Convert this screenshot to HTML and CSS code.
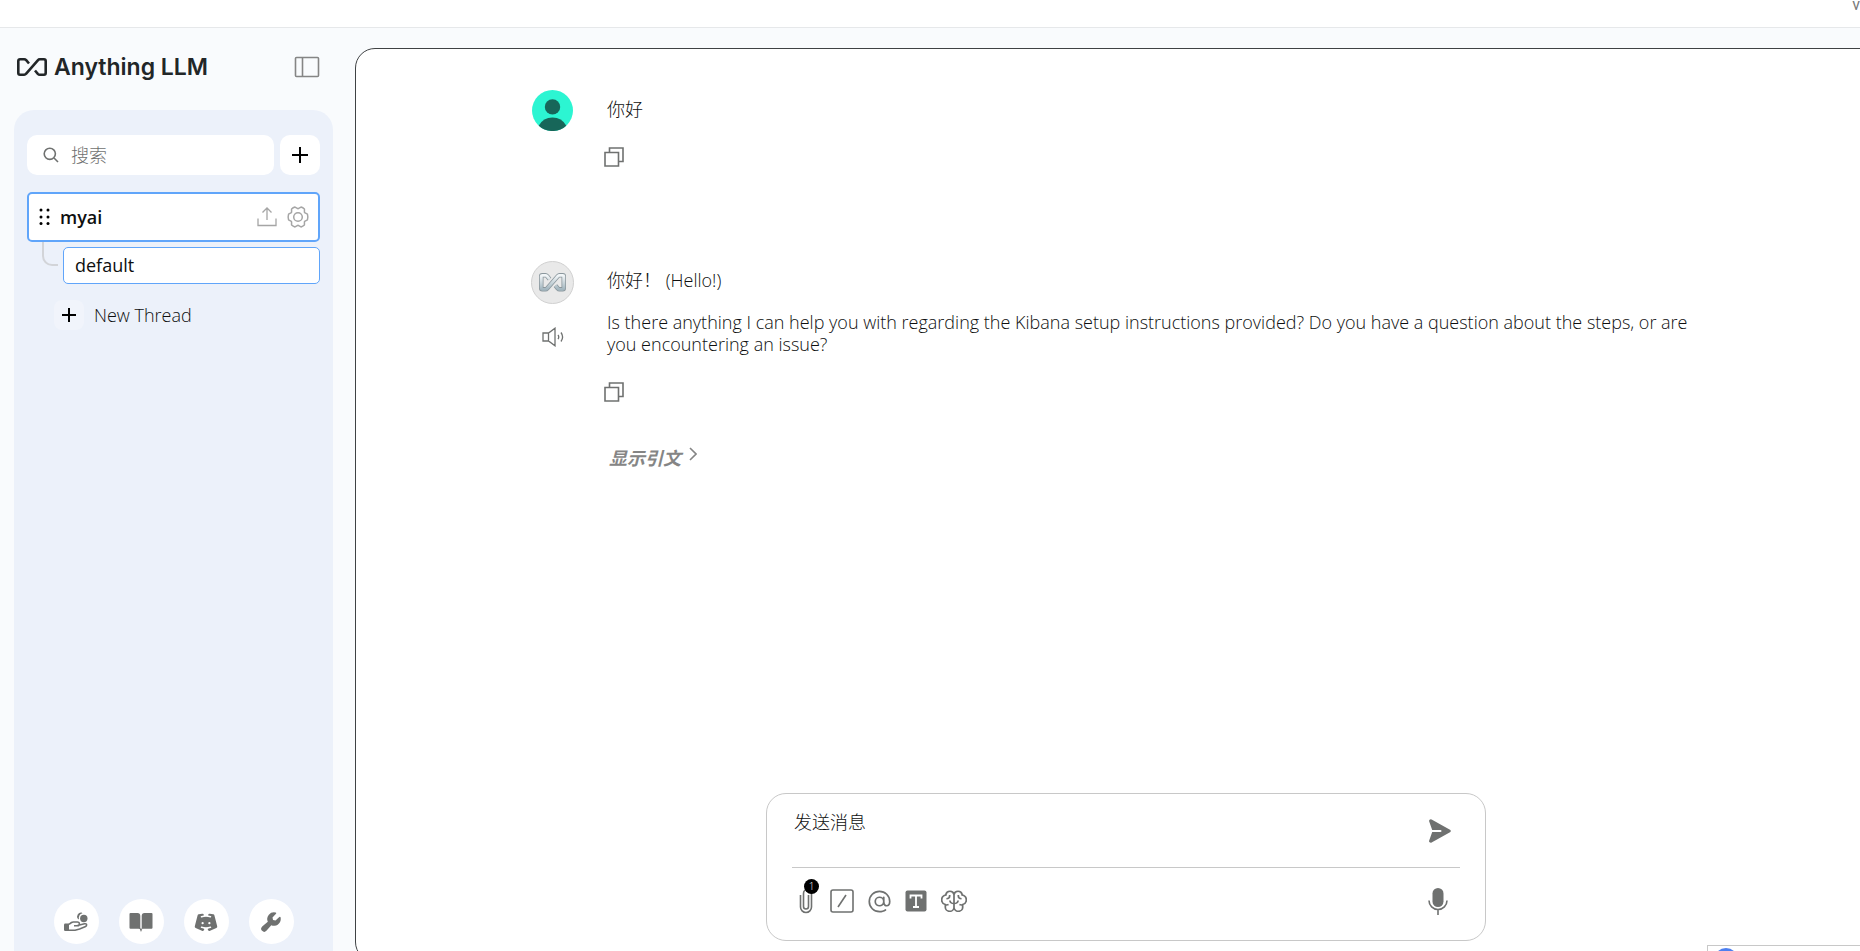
FILE: index.html
```html
<!DOCTYPE html>
<html lang="zh">
  <head>
    <meta charset="UTF-8" />
    <meta name="viewport" content="width=device-width, initial-scale=1.0" />
    <title>Anything LLM</title>

    <link rel="stylesheet" href="styles.css">
  </head>
  <body>
    <header class="topbar">v</header>

    <div class="app">
      <!-- ============== Sidebar ============== -->
      <aside class="sidebar">
        <div class="brand">
          <a class="brand-link" href="#">
            <svg class="brand-logo" viewBox="0 0 30 18" width="30" height="18">
              <path
                d="M12 5.5 9.2 2.2Q8.300 1.300 7.200 1.300H3Q1.300 1.300 1.300 3V15Q1.300 16.700 3 16.700H7.200Q8.300 16.700 9.200 15.700L20.800 2.300Q21.700 1.300 22.800 1.300H27Q28.700 1.300 28.700 3V15Q28.700 16.700 27 16.700H22.800Q21.700 16.700 20.800 15.800L18 12.500"
                fill="none" stroke="currentColor" stroke-width="2.6" />
            </svg>
            <span>Anything LLM</span>
          </a>
          <button class="icon-btn" aria-label="Toggle sidebar">
            <svg viewBox="0 0 26 22" width="26" height="22" class="line">
              <rect x="1.500" y="1.500" width="23" height="19" rx="1" />
              <path d="M8.500 1.500v19" />
            </svg>
          </button>
        </div>

        <div class="panel">
          <div class="search-row">
            <label class="search">
              <svg viewBox="0 0 16 16" width="16" height="16" class="line">
                <circle cx="6.800" cy="6.800" r="5.600" />
                <path d="M11 11l4 4" />
              </svg>
              <input type="text" placeholder="搜索" aria-label="搜索" />
            </label>
            <button class="add-btn" aria-label="New workspace">
              <svg viewBox="0 0 16 16" width="16" height="16" class="plus">
                <path d="M8 0v16M0 8h16" />
              </svg>
            </button>
          </div>

          <div class="workspace">
            <svg viewBox="0 0 12 18" width="12" height="18" class="grip">
              <circle cx="2" cy="2" r="1.500" /><circle cx="9" cy="2" r="1.500" />
              <circle cx="2" cy="9" r="1.500" /><circle cx="9" cy="9" r="1.500" />
              <circle cx="2" cy="15.500" r="1.500" /><circle cx="9" cy="15.500" r="1.500" />
            </svg>
            <a class="workspace-name" href="#">myai</a>
            <button class="icon-btn pale" aria-label="Upload">
              <svg viewBox="0 0 20 20" width="20" height="20" class="line thin">
                <path d="M1 11.500V18.500H19V11.500M10 13V1.500M5.500 5.500 10 1l4.500 4.500" />
              </svg>
            </button>
            <button class="icon-btn pale" aria-label="Settings">
              <svg viewBox="16 16 224 224" width="24" height="24" class="gear">
                <circle cx="128" cy="128" r="40" />
                <path d="M130 206h-4l-26 15a96 96 0 0 1-32-18l-.1-30-2-3.500-26-15a94 94 0 0 1 0-53l26-15 2-3.500.1-30a96 96 0 0 1 32-18l26 15h4l26-15a96 96 0 0 1 32 18l.1 30 2 3.500 26 15a94 94 0 0 1 0 53l-26 15-2 3.500-.1 30a96 96 0 0 1-32 18Z" />
              </svg>
            </button>
          </div>

          <div class="threads">
            <span class="branch"></span>
            <a class="thread" href="#">default</a>
          </div>

          <button class="new-thread">
            <span class="new-thread-icon">
              <svg viewBox="0 0 14 14" width="14" height="14" class="plus">
                <path d="M7 0v14M0 7h14" />
              </svg>
            </span>
            New Thread
          </button>

          <nav class="footer-links">
            <a href="#" aria-label="Support">
              <svg viewBox="0 0 24 20" width="24" height="20">
                <circle cx="19.800" cy="6.500" r="3.700" fill="currentColor" />
                <path d="M17.500 0.600A4 4 0 0 0 13.800 6.800L15 7.500a5 5 0 0 1 3.500-6.300z" fill="currentColor" />
                <path d="M0 12.800q0-1.200 1.200-1.200H5V19H1.200Q0 19 0 17.800z" fill="currentColor" />
                <path d="M5 12.300 7.500 10.500Q8.200 10 9.300 10H13.500a1.900 1.900 0 0 1 0 3.800H10M13.500 13.600l7-1.800q2-.3 2.100 1t-1 1.700l-6 2.600-4.500 1.200H5" fill="none" stroke="currentColor" stroke-width="1.600" />
              </svg>
            </a>
            <a href="#" aria-label="Docs">
              <svg viewBox="0 0 24 20" width="24" height="20" fill="currentColor">
                <path d="M1.500 1H8.500Q11.300 1 11.300 4V17.500Q11.300 16.800 9.500 16.800H1.500Q.5 16.800 .5 15.800V2Q.5 1 1.500 1ZM22.500 1H15.500Q12.700 1 12.700 4V17.500Q12.700 16.800 14.500 16.800H22.500Q23.500 16.800 23.500 15.800V2Q23.500 1 22.500 1ZM10.600 16.500H13.400L12 20Z" />
              </svg>
            </a>
            <a href="#" aria-label="Discord">
              <svg viewBox="0 0 256 256" width="24" height="24" fill="currentColor">
                <path d="M247.510,174.390,218,58a16.080,16.080,0,0,0-13-11.880l-36.060-5.920a16.220,16.220,0,0,0-18.260,11.880l-.21.85a4,4,0,0,0,3.270,4.930,155.620,155.620,0,0,1,24.410,5.620,8.200,8.200,0,0,1,5.620,9.700,8,8,0,0,1-10.190,5.640,155.400,155.400,0,0,0-90.800-.1,8.220,8.220,0,0,1-10.280-4.810,8,8,0,0,1,5.080-10.330,156.850,156.850,0,0,1,24.720-5.720,4,4,0,0,0,3.270-4.930l-.21-.85A16.210,16.210,0,0,0,87.080,40.210L51,46.130A16.080,16.080,0,0,0,38,58L8.490,174.390a15.940,15.940,0,0,0,9.060,18.510l67,29.710a16.170,16.170,0,0,0,21.710-9.100l3.490-9.450a4,4,0,0,0-3.270-5.350,158.130,158.130,0,0,1-28.630-6.200,8.200,8.200,0,0,1-5.610-9.670,8,8,0,0,1,10.200-5.660,155.590,155.590,0,0,0,91.120,0,8,8,0,0,1,10.190,5.650,8.190,8.190,0,0,1-5.610,9.680,157.840,157.840,0,0,1-28.620,6.200,4,4,0,0,0-3.270,5.350l3.490,9.450a16.180,16.180,0,0,0,21.710,9.100l67-29.710A15.940,15.940,0,0,0,247.510,174.390ZM92,152a12,12,0,1,1,12-12A12,12,0,0,1,92,152Zm72,0a12,12,0,1,1,12-12A12,12,0,0,1,164,152Z" />
              </svg>
            </a>
            <a href="#" aria-label="Settings">
              <svg viewBox="0 0 256 256" width="24" height="24" fill="currentColor">
                <path d="M232,96a72,72,0,0,1-100.940,66L79,222.220c-.12.14-.26.29-.39.42a32,32,0,0,1-45.260-45.260c.14-.13.28-.27.43-.39L94,124.940a72.070,72.070,0,0,1,83.540-98.780,8,8,0,0,1,3.930,13.190L144,80l5.660,26.350L176,112l40.650-37.520a8,8,0,0,1,13.190,3.930A72.600,72.600,0,0,1,232,96Z" />
              </svg>
            </a>
          </nav>
        </div>
      </aside>

      <!-- ============== Chat ============== -->
      <main class="chat">
        <div class="history">
          <article class="message">
            <div class="message-side">
              <svg viewBox="0 0 40 40" width="41" height="41" class="avatar">
                <circle cx="20" cy="20" r="20" fill="#2cf5d2" />
                <circle cx="20" cy="16.500" r="7.500" fill="#176659" />
                <path d="M6.500 34.800Q11 26.800 20 26.800T33.500 34.800A20 20 0 0 1 6.500 34.800Z" fill="#176659" />
              </svg>
            </div>
            <div class="message-body">
              <p>你好</p>
              <button class="icon-btn copy" aria-label="Copy">
                <svg viewBox="0 0 20 20" width="20" height="20" class="line">
                  <path d="M1 5.500H14.500V19H1ZM5.500 5.500V1H19V14.500H14.500" />
                </svg>
              </button>
            </div>
          </article>

          <article class="message">
            <div class="message-side">
              <svg viewBox="0 0 44 44" width="43" height="43" class="avatar">
                <defs>
                  <linearGradient id="steel" x1="0" y1="0" x2="0" y2="1">
                    <stop offset="0" stop-color="#f2f6f8" />
                    <stop offset="1" stop-color="#a3b6bf" />
                  </linearGradient>
                </defs>
                <circle cx="22" cy="22" r="21.500" fill="#e9e9e9" stroke="#cfcfcf" />
                <g fill="none" stroke-linejoin="round">
                  <path d="M19 18.500 16.500 15.500Q15.800 14.700 14.800 14.700H11.500Q10.500 14.700 10.500 15.700V28Q10.500 29 11.500 29H14.800Q15.800 29 16.500 28.200L27.500 15.500Q28.200 14.700 29.200 14.700H32.500Q33.500 14.700 33.500 15.700V28Q33.500 29 32.500 29H29.200Q28.200 29 27.500 28.200L25 25.200" stroke="#8b979d" stroke-width="4.600" />
                  <path d="M19 18.500 16.500 15.500Q15.800 14.700 14.800 14.700H11.500Q10.500 14.700 10.500 15.700V28Q10.500 29 11.500 29H14.800Q15.800 29 16.500 28.200L27.500 15.500Q28.200 14.700 29.200 14.700H32.500Q33.500 14.700 33.500 15.700V28Q33.500 29 32.500 29H29.200Q28.200 29 27.500 28.200L25 25.200" stroke="url(#steel)" stroke-width="3" />
                </g>
              </svg>
              <button class="icon-btn" aria-label="Speak">
                <svg viewBox="0 0 22 20" width="22" height="20" class="line thin">
                  <path d="M1 6H6.500L13 1.200V18.800L6.500 14H1ZM6.500 6V14M16 8Q17.500 10 16 12.200M19 5.500Q22.200 10 19 14.500" />
                </svg>
              </button>
            </div>
            <div class="message-body">
              <p>你好！ (Hello!)</p>
              <p>
                Is there anything I can help you with regarding the Kibana setup
                instructions provided? Do you have a question about the steps,
                or are you encountering an issue?
              </p>
              <button class="icon-btn copy" aria-label="Copy">
                <svg viewBox="0 0 20 20" width="20" height="20" class="line">
                  <path d="M1 5.500H14.500V19H1ZM5.500 5.500V1H19V14.500H14.500" />
                </svg>
              </button>
              <button class="citations">
                <em>显示引文</em>
                <svg viewBox="0 0 8 14" width="8" height="14" class="line">
                  <path d="M1 1l6 6-6 6" />
                </svg>
              </button>
            </div>
          </article>
        </div>

        <form class="prompt">
          <div class="prompt-top">
            <textarea rows="2" placeholder="发送消息" aria-label="发送消息"></textarea>
            <button type="button" class="icon-btn" aria-label="Send">
              <svg viewBox="0 0 22 24" width="22" height="24" fill="currentColor">
                <path d="M2.600.4 21 10.700q1.600 1.200 0 2.500L2.600 23.600Q1.500 24.100.6 23.300T.2 21.500L3.200 13H11.500a1 1 0 0 0 0-2H3.200L.2 2.500Q-.1 1.500.6.700T2.600.4Z" />
              </svg>
            </button>
          </div>
          <div class="prompt-tools">
            <button type="button" class="icon-btn attach" aria-label="Attach file">
              <svg viewBox="0 0 14 26" width="14" height="26" class="line">
                <path d="M1.500 7V19a5.500 5.500 0 0 0 11 0V5.500a4 4 0 0 0-8 0V18.500a2.500 2.500 0 0 0 5 0V7" />
              </svg>
              <span class="badge">1</span>
            </button>
            <button type="button" class="icon-btn" aria-label="Slash commands">
              <svg viewBox="0 0 24 24" width="24" height="24" class="line">
                <rect x="1" y="1" width="22" height="22" rx="2" />
                <path d="M8 18l8-12" />
              </svg>
            </button>
            <button type="button" class="icon-btn" aria-label="Agents">
              <svg viewBox="20 20 216 216" width="23" height="23" fill="currentColor">
                <path d="M128,24a104,104,0,0,0,0,208c21.510,0,44.100-6.480,60.430-17.330a8,8,0,0,0-8.860-13.330C166,210.380,146.210,216,128,216a88,88,0,1,1,88-88c0,26.450-10.880,32-20,32s-20-5.550-20-32V88a8,8,0,0,0-16,0v4.260a48,48,0,1,0,5.930,65.100c6,12,16.350,18.640,30.070,18.640,22.540,0,36-17.940,36-48A104.110,104.110,0,0,0,128,24Zm0,136a32,32,0,1,1,32-32A32,32,0,0,1,128,160Z" />
              </svg>
            </button>
            <button type="button" class="icon-btn" aria-label="Text size">
              <svg viewBox="0 0 22 22" width="22" height="22">
                <rect x=".5" y=".5" width="21" height="21" rx="2" fill="currentColor" />
                <path d="M5.500 8.500V5.500H16.500V8.500M11 5.500V17M8 17H14" fill="none" stroke="#fff" stroke-width="1.800" />
              </svg>
            </button>
            <button type="button" class="icon-btn" aria-label="Model">
              <svg viewBox="0 0 24 22" width="26" height="22" class="line" preserveAspectRatio="none">
                <path d="M12 4.500A3.800 3.800 0 0 0 4.500 4.500V5A5 5 0 0 0 4 14.600V17.200A3.900 3.900 0 0 0 12 17.500ZM12 4.500A3.800 3.800 0 0 1 19.500 4.500V5A5 5 0 0 1 20 14.600V17.200A3.900 3.900 0 0 1 12 17.500" />
                <path d="M12 13.500Q8.500 13.500 8.200 10.500M12 13.500Q15.500 13.500 15.800 10.500M8 5V6Q8 8.600 5 8.800M16 5V6Q16 8.600 19 8.800M4 14.800Q5.500 15.200 7 14.600M20 14.800Q18.500 15.200 17 14.600" />
              </svg>
            </button>
            <button type="button" class="icon-btn mic" aria-label="Voice input">
              <svg viewBox="0 0 20 28" width="20" height="28">
                <rect x="4.500" y="1" width="11" height="19" rx="5.500" fill="currentColor" />
                <path d="M1 13.500a9 9 0 0 0 18 0M10 22.500V28" fill="none" stroke="currentColor" stroke-width="1.600" />
              </svg>
            </button>
          </div>
        </form>
      </main>
    </div>

    <div class="corner-popup"><span class="corner-dot"></span></div>
  </body>
</html>
```

FILE: styles.css
```css
* {
  box-sizing: border-box;
}

body {
  display: flex;
  flex-direction: column;
  height: 100vh;
  margin: 0;
  overflow: hidden;
  position: relative;
  background: #f9fbfd;
  color: #0e0f0f;
  font-family: "Open Sans", "Noto Sans CJK SC", sans-serif;
  font-size: 18px;
  font-weight: 300;
}

a {
  color: inherit;
  text-decoration: none;
}

p {
  margin: 0;
}

button,
input,
textarea {
  margin: 0;
  padding: 0;
  border: none;
  outline: none;
  background: none;
  color: inherit;
  font: inherit;
}

button {
  cursor: pointer;
}

svg {
  display: block;
  flex: none;
}

.line {
  fill: none;
  stroke: currentColor;
  stroke-width: 1.6;
}

.thin {
  stroke-width: 1.3;
}

.plus {
  fill: none;
  stroke: #000;
  stroke-width: 2;
}

.gear {
  fill: none;
  stroke: currentColor;
  stroke-width: 14;
  stroke-linejoin: round;
}

.icon-btn {
  color: #6f7170;
}

.pale {
  color: #a5a5a5;
}

.topbar {
  flex: none;
  height: 28px;
  border-bottom: 1px solid #e6e8ea;
  background: #fff;
  color: #7a7a7a;
  font-family: Roboto, sans-serif;
  font-size: 16px;
  font-weight: 400;
  line-height: 10px;
  text-align: right;
}

.app {
  display: flex;
  flex: 1;
  min-height: 0;
}

/* sidebar */

.sidebar {
  display: flex;
  flex: none;
  flex-direction: column;
  width: 355px;
  padding: 20px 22px 0 14px;
}

.brand {
  display: flex;
  align-items: center;
  justify-content: space-between;
  height: 38px;
  margin-bottom: 24px;
  padding: 0 13px 0 3px;
}

.brand-link {
  display: flex;
  align-items: center;
  gap: 7px;
  color: #222628;
  font-family: "Inter", sans-serif;
  font-size: 23px;
  font-weight: 600;
}

.brand .icon-btn {
  color: #858585;
}

.panel {
  display: flex;
  flex: 1;
  flex-direction: column;
  padding: 25px 13px 7px;
  border-radius: 20px 20px 0 0;
  background: #ecf1fa;
}

.search-row {
  display: flex;
  gap: 6px;
  margin-bottom: 17px;
}

.search {
  display: flex;
  flex: 1;
  align-items: center;
  gap: 12px;
  min-width: 0;
  height: 40px;
  padding: 0 16px;
  border-radius: 10px;
  background: #fff;
  color: #6f7170;
}

.search input {
  flex: 1;
  min-width: 0;
}

.search input::placeholder {
  color: #6f7170;
}

.add-btn {
  display: flex;
  flex: none;
  align-items: center;
  justify-content: center;
  width: 40px;
  height: 40px;
  border-radius: 10px;
  background: #fff;
}

.workspace {
  display: flex;
  align-items: center;
  gap: 9px;
  height: 50px;
  padding: 0 8px 0 10px;
  border: 2px solid #60a5fa;
  border-radius: 5px;
  background: #fff;
}

.grip {
  fill: #000;
}

.workspace-name {
  flex: 1;
  font-weight: 600;
}

.threads {
  display: flex;
}

.branch {
  width: 16px;
  height: 24px;
  margin: 0 5px 0 15px;
  border: solid #d2d4d8;
  border-width: 0 0 2px 2px;
  border-radius: 0 0 0 10px;
}

.thread {
  flex: 1;
  height: 37px;
  margin-top: 5px;
  padding: 0 11px;
  border: 1px solid #60a5fa;
  border-radius: 5px;
  background: #fff;
  font-weight: 400;
  line-height: 35px;
}

.new-thread {
  display: flex;
  align-items: center;
  gap: 10px;
  margin: 16px 0 0 27px;
}

.new-thread-icon {
  display: flex;
  align-items: center;
  justify-content: center;
  width: 30px;
  height: 30px;
  border-radius: 8px;
  background: #f1f4fb;
}

.footer-links {
  display: flex;
  justify-content: center;
  gap: 20px;
  margin-top: auto;
}

.footer-links a {
  display: flex;
  align-items: center;
  justify-content: center;
  width: 45px;
  height: 45px;
  border-radius: 50%;
  background: #fff;
  color: #6f7170;
}

/* chat */

.chat {
  display: flex;
  flex: 1;
  flex-direction: column;
  align-items: center;
  margin: 20px -37px -11px 0;
  padding-bottom: 20px;
  border: 1px solid #3f4244;
  border-radius: 20px;
  background: #fff;
}

.history {
  display: flex;
  flex: 1;
  flex-direction: column;
  gap: 94px;
  width: 100%;
  max-width: 1190px;
  padding: 41px 0 0;
}

.message {
  display: flex;
  gap: 33px;
}

.message-side {
  display: flex;
  flex: none;
  flex-direction: column;
  align-items: center;
  gap: 23px;
  width: 43px;
}

.message-body {
  display: flex;
  flex: 1;
  flex-direction: column;
  align-items: flex-start;
  gap: 20px;
  padding-top: 8px;
  line-height: 22px;
}

.message-body .copy {
  margin: 7px 0 0 -3px;
}

.citations {
  display: flex;
  gap: 8px;
  margin: 25px 0 0 2px;
  color: #858585;
  font-weight: 700;
}

.prompt {
  width: 720px;
  max-width: 100%;
  padding: 0 25px;
  border: 1px solid #c8c8c8;
  border-radius: 20px;
  background: #fff;
}

.prompt-top {
  display: flex;
  align-items: center;
  height: 74px;
  padding: 0 9px 0 2px;
  border-bottom: 1px solid #c8c8c8;
}

.prompt textarea {
  flex: 1;
  height: 40px;
  line-height: 22px;
  resize: none;
}

.prompt textarea::placeholder {
  color: #0e0f0f;
}

.prompt-tools {
  display: flex;
  align-items: center;
  gap: 14px;
  height: 72px;
  padding: 0 12px 6px 7px;
}

.attach {
  position: relative;
  margin-right: 3px;
}

.badge {
  position: absolute;
  top: -9px;
  right: -6px;
  width: 15px;
  height: 15px;
  border-radius: 50%;
  background: #000;
  color: #fff;
  font-size: 10px;
  line-height: 15px;
}

.mic {
  margin-left: auto;
}

/* widget peeking in from the lower right corner */

.corner-popup {
  position: absolute;
  right: 0;
  bottom: 0;
  width: 153px;
  height: 6px;
  overflow: hidden;
  border: solid #c8c8c8;
  border-width: 1px 0 0 1px;
  background: #fff;
}

.corner-dot {
  display: block;
  width: 24px;
  height: 24px;
  margin: 2px 0 0 6px;
  border-radius: 50%;
  background: #4d7ff0;
}
```
